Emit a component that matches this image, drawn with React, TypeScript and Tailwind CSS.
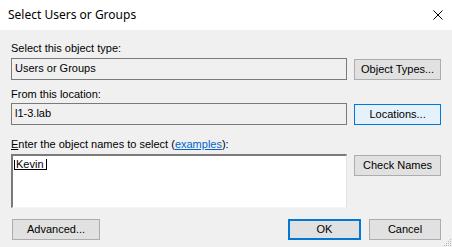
import React from 'react';

const ui = { fontFamily: '"Liberation Sans", Arial, sans-serif' };
const title = { fontFamily: '"Noto Sans", "Open Sans", sans-serif' };

const Btn: React.FC<{ label: string; className?: string }> = ({ label, className = '' }) => (
  <button
    className={`h-[21px] flex items-center justify-center text-[11px] text-black bg-[#e1e1e1] border border-[#adadad] ${className}`}
    style={ui}
  >
    {label}
  </button>
);

const ReadOnlyBox: React.FC<{ value: string }> = ({ value }) => (
  <div className="w-[337px] h-[22px] flex items-center pl-[3px] pb-[2px] border border-[#7a7a7a] bg-[#f0f0f0] text-[11px] text-black">
    {value}
  </div>
);

const App: React.FC = () => {
  return (
    <div className="w-[452px] h-[247px] bg-[#f0f0f0] relative overflow-hidden select-none" style={ui}>
      {/* title bar */}
      <div className="h-[30px] bg-white flex items-center justify-between pl-[8px] pr-[8px]">
        <span className="text-[12px] text-black" style={title}>Select Users or Groups</span>
        <svg width="10" height="10" viewBox="0 0 10 10" className="mr-[1px]">
          <path d="M0.5 0.5 L9.5 9.5 M9.5 0.5 L0.5 9.5" stroke="#000" strokeWidth="1" />
        </svg>
      </div>

      <div className="px-[11px]">
        <div className="mt-[12px] h-[13px] leading-[13px] text-[11px] text-black">Select this object type:</div>
        <div className="mt-[3px] flex gap-[7px] items-start">
          <ReadOnlyBox value="Users or Groups" />
          <Btn label="Object Types..." className="w-[87px] mt-px" />
        </div>

        <div className="mt-[8px] h-[13px] leading-[13px] text-[11px] text-black">From this location:</div>
        <div className="mt-[2px] flex gap-[7px] items-start">
          <ReadOnlyBox value="l1-3.lab" />
          <button className="w-[87px] h-[21px] mt-px flex items-center justify-center text-[11px] text-black bg-[#e5f1fb] border border-[#0078d7]">
            Locations...
          </button>
        </div>

        <div className="mt-[13px] h-[13px] leading-[13px] text-[11px] text-black">
          <span className="underline">E</span>nter the object names to select (
          <span className="text-[#0066cc] underline">examples</span>):
        </div>
        <div className="mt-[3px] flex gap-[7px] items-start">
          <div className="w-[336px] h-[54px] bg-white border-t-2 border-l-2 border-b border-r border-t-[#7a7a7a] border-l-[#7a7a7a] border-b-[#f5f5f5] border-r-[#e3e3e3] pl-[1px] pt-[4px] flex items-start">
            <div className="flex items-end h-[10px] border-l border-b border-black text-[11px] leading-[10px] text-black">
              <span className="pl-px">Kevin</span>
              <span className="w-px h-[10px] bg-black ml-[2px]" />
            </div>
          </div>
          <Btn label="Check Names" className="w-[87px] mt-px" />
        </div>

        <div className="mt-[11px] flex items-start">
          <Btn label="Advanced..." className="w-[88px] ml-px" />
          <div className="flex-1" />
          <button className="w-[73px] h-[21px] flex items-center justify-center text-[11px] text-black bg-[#e1e1e1] border-2 border-[#0078d7]">
            OK
          </button>
          <Btn label="Cancel" className="w-[72px] ml-[8px]" />
        </div>
      </div>

      {/* resize grip */}
      <svg width="8" height="8" viewBox="0 0 8 8" className="absolute right-0 bottom-0">
        <rect x="6" y="0" width="1" height="1" fill="#b8b8b8" />
        <rect x="4" y="2" width="1" height="1" fill="#b8b8b8" />
        <rect x="6" y="2" width="1" height="1" fill="#b8b8b8" />
        <rect x="2" y="4" width="1" height="1" fill="#b8b8b8" />
        <rect x="4" y="4" width="1" height="1" fill="#b8b8b8" />
        <rect x="6" y="4" width="1" height="1" fill="#b8b8b8" />
        <rect x="0" y="6" width="1" height="1" fill="#b8b8b8" />
        <rect x="2" y="6" width="1" height="1" fill="#b8b8b8" />
        <rect x="4" y="6" width="1" height="1" fill="#b8b8b8" />
        <rect x="6" y="6" width="1" height="1" fill="#b8b8b8" />
      </svg>
    </div>
  );
};

export default App;
